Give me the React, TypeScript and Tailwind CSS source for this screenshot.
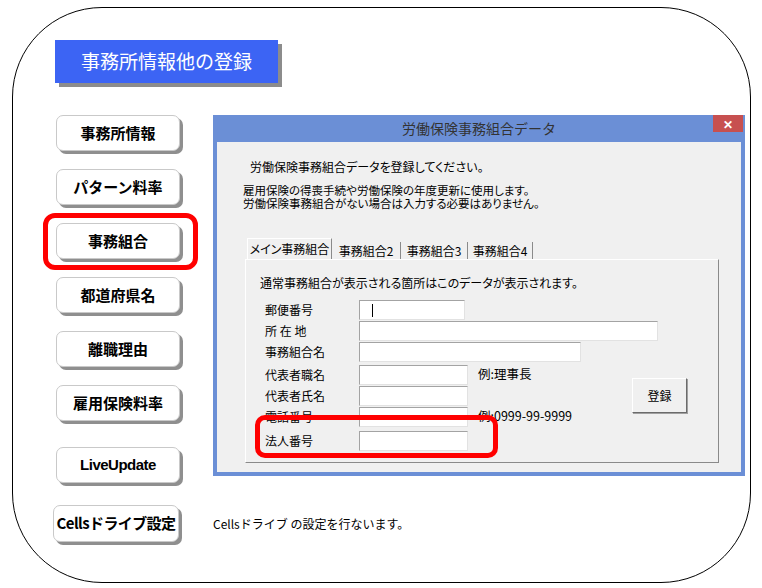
import React from "react";

const jp = "font-['Noto_Sans_CJK_JP',sans-serif]";
const btn =
  "w-[124px] h-[36px] bg-white border border-[#c9c9c9] rounded-[7px] shadow-[3px_3px_0_#8f8f8f] flex items-center justify-center text-[15px] font-bold text-black";
const input = "h-[20px] bg-white border-t border-l border-[#a3a3a3] border-r border-b border-r-[#e2e2e2] border-b-[#e2e2e2]";

function Row({label, w, hint, children}: {label: string; w: number; hint?: string; children?: React.ReactNode}) {
  return (
    <div className="flex items-center h-[21px]">
      <span className="w-[94px] shrink-0">{label}</span>
      <div className={`${input} relative shrink-0`} style={{width: w}}>
        {children}
      </div>
      {hint && <span className="ml-[10px] text-[12.5px]">{hint}</span>}
    </div>
  );
}

export default function App() {
  const menu = ["事務所情報", "パターン料率", "事務組合", "都道府県名", "離職理由", "雇用保険料率"];

  return (
    <div className={`w-[762px] h-[588px] bg-white overflow-hidden ${jp}`}>
      <div className="ml-[12px] mt-[7px] w-[739px] h-[576px] border border-black rounded-[90px] pl-[42px] pt-[32px]">
        {/* banner */}
        <div className="w-[223px] h-[43px] bg-[#3c64f4] shadow-[4px_4px_0_#8c8c8c] flex items-center justify-center text-white text-[19px]">
          事務所情報他の登録
        </div>

        <div className="flex mt-[32px]">
          {/* left buttons */}
          <div className="flex flex-col gap-[18px] ml-[1px]">
            {menu.map((m) => (
              <div key={m} className="relative">
                <div className={btn}>{m}</div>
                {m === "事務組合" && (
                  <div className="absolute left-[-13px] top-[-10px] w-[155px] h-[57px] border-[5px] border-[#ff0000] rounded-[12px]" />
                )}
              </div>
            ))}
            <div className={`${btn} mt-[8px] font-['Liberation_Sans',sans-serif] text-[14px] tracking-[-0.5px]`}>LiveUpdate</div>
          </div>

          {/* dialog */}
          <div className="ml-[33px] w-[532px] h-[361px] bg-[#6b8fd6] flex flex-col px-[4px] pb-[4px]">
            <div className="h-[27px] relative flex items-center justify-center text-[14px] text-[#333]">
              労働保険事務組合データ
              <div className="absolute right-[-2px] top-0 w-[30px] h-[17px] bg-[#c75050] flex items-center justify-center text-white text-[12px] font-bold">
                ✕
              </div>
            </div>
            <div className="flex-1 bg-[#f0f0f0] pt-[18px] text-[12px] text-black [font-feature-settings:'palt']">
              <p className="pl-[33px] leading-[14px]">労働保険事務組合データを登録してください。</p>
              <div className="pl-[26px] mt-[10px] text-[11.5px] leading-[13px]">
                <p>雇用保険の得喪手続や労働保険の年度更新に使用します。</p>
                <p>労働保険事務組合がない場合は入力する必要はありません。</p>
              </div>

              {/* tabs */}
              <div className="pl-[30px] mt-[28px] flex items-end h-[21px] leading-[14px]">
                <div className="w-[85px] h-[21px] border-t border-l border-white border-r border-r-[#8a8a8a] bg-[#f0f0f0] flex items-center justify-center">
                  メイン事務組合
                </div>
                {["事務組合2", "事務組合3", "事務組合4"].map((t, i) => (
                  <div
                    key={t}
                    className={`h-[17px] border-r border-[#8a8a8a] flex items-center justify-center ${i === 0 ? "w-[69px]" : i === 1 ? "w-[67px]" : "w-[65px]"}`}
                  >
                    {t}
                  </div>
                ))}
              </div>

              {/* panel */}
              <div className="ml-[28px] w-[474px] h-[204px] border-t border-l border-white border-r border-b border-r-[#8a8a8a] border-b-[#8a8a8a] relative pt-[16px]">
                <p className="pl-[14px] leading-[14px]">通常事務組合が表示される箇所はこのデータが表示されます。</p>
                <div className="pl-[19px] mt-[9px] flex flex-col">
                  <Row label="郵便番号" w={106}>
                    <div className="absolute left-[12px] top-[3px] w-px h-[13px] bg-black" />
                  </Row>
                  <Row label="所 在 地" w={299} />
                  <Row label="事務組合名" w={222} />
                  <div className="flex mt-[2px]">
                    <div className="w-[367px] flex flex-col">
                      <Row label="代表者職名" w={109} hint="例:理事長" />
                      <Row label="代表者氏名" w={109} />
                      <Row label="電話番号" w={109} hint="例:0999-99-9999" />
                    </div>
                    <div className="self-center w-[55px] h-[35px] bg-[#f0f0f0] border-t border-l border-white border-r border-b border-r-[#6b6b6b] border-b-[#6b6b6b] shadow-[1px_1px_0_#a0a0a0] flex items-center justify-center">
                      登録
                    </div>
                  </div>
                  <div className="mt-[3px]">
                    <Row label="法人番号" w={109} />
                  </div>
                </div>
                <div className="absolute left-[9px] top-[155px] w-[243px] h-[43px] border-[5px] border-[#ff0000] rounded-[10px]" />
              </div>
            </div>
          </div>
        </div>

        {/* bottom row */}
        <div className="flex items-center mt-[22px] ml-[-2px]">
          <div className={`${btn} w-[126px] h-[37px] text-[14px] tracking-[-0.6px] whitespace-nowrap`}>Cellsドライブ設定</div>
          <span className="ml-[34px] text-[12px] text-black">Cellsドライブ の設定を行ないます。</span>
        </div>
      </div>
    </div>
  );
}
